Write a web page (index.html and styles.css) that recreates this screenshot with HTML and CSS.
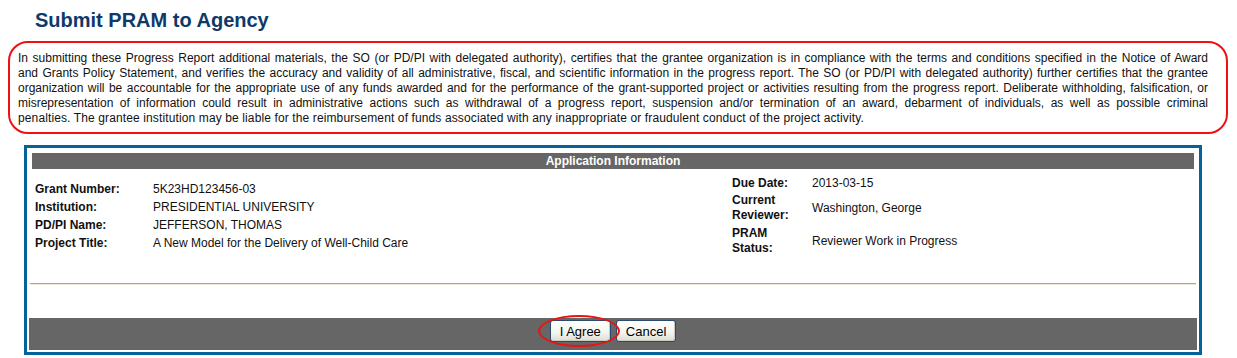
FILE: index.html
```html
<!DOCTYPE html>
<html>
<head>
<meta charset="utf-8">
<link rel="stylesheet" href="styles.css">
</head>
<body>
<h1 class="title">Submit PRAM to Agency</h1>
<div class="notice">
  <span class="ln">In submitting these Progress Report additional materials, the SO (or PD/PI with delegated authority), certifies that the grantee organization is in compliance with the terms and conditions specified in the Notice of Award</span>
  <span class="ln">and Grants Policy Statement, and verifies the accuracy and validity of all administrative, fiscal, and scientific information in the progress report. The SO (or PD/PI with delegated authority) further certifies that the grantee</span>
  <span class="ln">organization will be accountable for the appropriate use of any funds awarded and for the performance of the grant-supported project or activities resulting from the progress report. Deliberate withholding, falsification, or</span>
  <span class="ln">misrepresentation of information could result in administrative actions such as withdrawal of a progress report, suspension and/or termination of an award, debarment of individuals, as well as possible criminal</span>
  <span class="ln last">penalties. The grantee institution may be liable for the reimbursement of funds associated with any inappropriate or fraudulent conduct of the project activity.</span>
</div>
<div class="panel">
  <div class="panel-body">
    <div class="panel-head">Application Information</div>
    <div class="info">
      <div class="info-left">
        <div class="row"><span class="lbl">Grant Number:</span><span class="val">5K23HD123456-03</span></div>
        <div class="row"><span class="lbl">Institution:</span><span class="val">PRESIDENTIAL UNIVERSITY</span></div>
        <div class="row"><span class="lbl">PD/PI Name:</span><span class="val">JEFFERSON, THOMAS</span></div>
        <div class="row"><span class="lbl">Project Title:</span><span class="val">A New Model for the Delivery of Well-Child Care</span></div>
      </div>
      <div class="info-right">
        <div class="rrow r1"><span class="rlbl">Due Date:</span><span class="val">2013-03-15</span></div>
        <div class="rrow r2"><span class="rlbl">Current Reviewer:</span><span class="val">Washington, George</span></div>
        <div class="rrow r2"><span class="rlbl">PRAM Status:</span><span class="val">Reviewer Work in Progress</span></div>
      </div>
    </div>
    <div class="rule"></div>
  </div>
  <div class="panel-foot">
    <span class="agree-wrap"><button class="btn">I Agree</button><span class="ring"></span></span>
    <button class="btn">Cancel</button>
  </div>
</div>
</body>
</html>
```

FILE: styles.css
```css
html, body {
  margin: 0;
  padding: 0;
  background: #fff;
}
body {
  font-family: "Liberation Sans", Arial, sans-serif;
  font-size: 12px;
  color: #000;
}
.title {
  margin: 0;
  padding: 8px 0 0 35px;
  font-size: 20px;
  line-height: 24px;
  font-weight: bold;
  color: #0e3a6a;
}
.notice {
  margin: 9px 9px 0 8px;
  border: 2px solid #ee1111;
  border-radius: 20px;
  padding: 8px 18px 6px 8px;
  line-height: 15px;
  color: #111;
}
.ln {
  display: block;
  text-align: justify;
  text-align-last: justify;
  white-space: nowrap;
}
.ln.last {
  text-align-last: left;
  letter-spacing: 0.12px;
}
.panel {
  margin: 11px 35px 0 24px;
  border: 3px solid #05639a;
  padding: 2px;
}
.panel-body {
  padding: 3px 1px 0;
}
.panel-head {
  margin: 0 2px;
  height: 16px;
  line-height: 16px;
  background: #666;
  color: #fff;
  font-weight: bold;
  text-align: center;
}
.info {
  display: grid;
  grid-template-columns: 697px 1fr;
  align-items: center;
  padding: 6px 0 0 5px;
}
.row {
  display: flex;
  height: 18px;
  align-items: center;
}
.lbl {
  width: 118px;
  font-weight: bold;
  color: #111;
}
.val {
  color: #111;
}
.rrow {
  display: flex;
  align-items: center;
}
.r1 { height: 16px; }
.r2 { height: 33px; }
.rlbl {
  width: 72px;
  margin-right: 8px;
  font-weight: bold;
  line-height: 15px;
  color: #111;
}
.rule {
  margin-top: 26px;
  border-top: 1px solid #a8a59d;
  border-bottom: 1px solid #ebe7d3;
}
.panel-foot {
  margin-top: 33px;
  height: 32px;
  background: #666;
  display: flex;
  justify-content: center;
  align-items: flex-start;
  gap: 5px;
  padding-top: 2px;
  box-sizing: border-box;
}
.agree-wrap {
  position: relative;
  display: inline-flex;
}
.btn {
  font-family: "Liberation Sans", Arial, sans-serif;
  font-size: 13px;
  color: #000;
  height: 22px;
  padding: 0 9px;
  border: 1px solid #2b4b6e;
  border-radius: 3px;
  background: linear-gradient(#ffffff, #f4f4ef 60%, #dcdcd2);
  box-shadow: inset -1px -1px 0 #c9c9bd;
}
.ring {
  position: absolute;
  left: -12px;
  top: -5px;
  width: 82px;
  height: 32px;
  box-sizing: border-box;
  border: 2px solid #ee1111;
  border-radius: 50%;
  pointer-events: none;
}
```
